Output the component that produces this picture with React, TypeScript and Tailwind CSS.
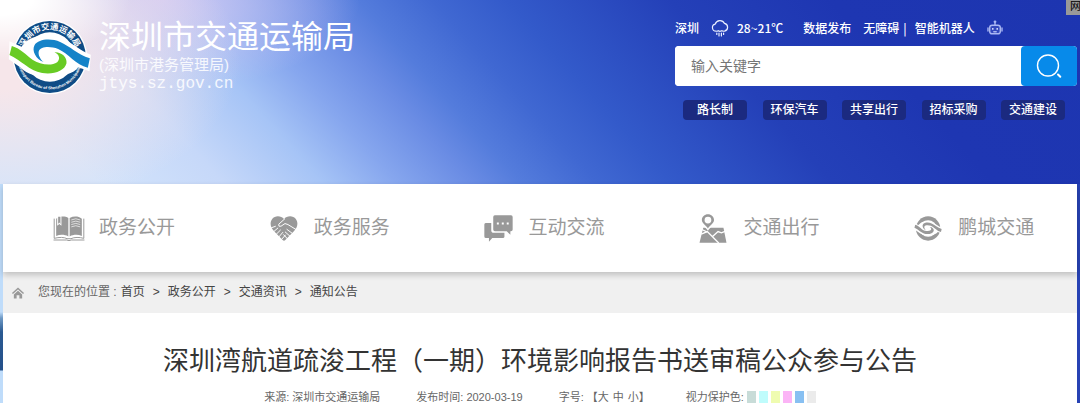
import type { ReactNode } from "react";

const quickLinks = ["路长制", "环保汽车", "共享出行", "招标采购", "交通建设"];

const crumbs = ["首页", "政务公开", "交通资讯", "通知公告"];

const eyeColors = [
  { name: "灰绿", className: "bg-[#c8dcd8]" },
  { name: "浅青", className: "bg-[#bffcfc]" },
  { name: "浅黄", className: "bg-[#effcb0]" },
  { name: "浅粉", className: "bg-[#fbb4f6]" },
  { name: "浅蓝", className: "bg-[#88c0f2]" },
  { name: "浅灰", className: "bg-[#ebebeb]" },
];

// Ring with the two interlocking roads, shared by the logo and the nav icon
function Emblem({ ring, upper, lower }: { ring: string; upper: string; lower: string }) {
  return (
    <>
      <circle cx="147" cy="171" r="112" fill="#fff" />
      <circle cx="147" cy="171" r="108" fill={ring} />
      <circle cx="147" cy="171" r="74" fill="#fff" />
      <path
        d="M26 124L62 140C84 112 110 104 150 106C200 110 225 148 270 164L266 214L232 202C210 236 100 246 62 205L24 178Z"
        fill="#fff"
      />
      <path
        d="M128 186C105 178 92 152 101 136C112 117 150 114 178 126C206 138 230 163 267 175L261 203C225 195 202 160 172 147C148 138 120 139 114 153C111 164 118 178 128 186Z"
        fill={upper}
      />
      <path
        d="M33 138L26 165C62 181 84 212 124 219C158 224 191 214 197 190C199 172 183 156 161 157C176 164 179 177 169 187C150 200 116 193 95 179C74 164 60 146 33 138Z"
        fill={lower}
      />
    </>
  );
}

function BureauLogo() {
  return (
    <svg viewBox="22 54 248 234" className="h-[78px] w-[83px] shrink-0" aria-hidden="true">
      <defs>
        <path id="arc-top" d="M65 171a82 82 0 0 1 164 0" />
        <path id="arc-bottom" d="M50 171a97 97 0 0 0 194 0" />
      </defs>
      <Emblem ring="#0f4c86" upper="#1583c8" lower="#68cb24" />
      <text fill="#fff" fontSize="25" fontWeight="700">
        <textPath href="#arc-top" startOffset="50%" textAnchor="middle">深圳市交通运输局</textPath>
      </text>
      <text fill="#fff" fontSize="12" fontWeight="700">
        <textPath href="#arc-bottom" startOffset="50%" textAnchor="middle">
          Transport Bureau of Shenzhen Municipality
        </textPath>
      </text>
    </svg>
  );
}

function RainIcon() {
  return (
    <svg viewBox="0 0 18 18" className="h-[18px] w-[18px]" fill="none" stroke="#e8edff" strokeWidth="1.2" strokeLinecap="round" aria-hidden="true">
      <path d="M5 12.2a3.6 3.6 0 0 1-.8-7.1A5 5 0 0 1 13.5 4.4 4 4 0 0 1 13.5 12.2c-1.3 .2-2-.2-2.8-.5-1 .6-2.600 .6-3.4 0-.8 .5-1.5 .6-2.3 .5z" />
      <path d="M5.8 14v1.500M8 14v3M10.4 14v3M12.6 14v1.500" />
    </svg>
  );
}

function RobotIcon() {
  return (
    <svg viewBox="0 0 16 16" className="h-4 w-4" fill="none" stroke="#a9b6f2" strokeWidth="1.4" aria-hidden="true">
      <path d="M8 5V3" />
      <circle cx="8" cy="1.8" r="1.4" fill="#a9b6f2" stroke="none" />
      <rect x="2.7" y="5.2" width="10.6" height="8.6" rx="2.4" fill="#3348bd" />
      <path d="M1 8v3M15 8v3M6.800 11.800h2.400" strokeLinecap="round" />
      <path d="M5.8 8v1.800M10.2 8v1.800" stroke="#dfe4ff" />
    </svg>
  );
}

function SearchIcon() {
  return (
    <svg viewBox="0 0 26 26" className="h-[26px] w-[26px]" fill="none" stroke="#fff" strokeWidth="1.4" strokeLinecap="round" aria-hidden="true">
      <circle cx="12" cy="12.5" r="10.5" />
      <path d="M22 21.500l2.300 2.300" strokeWidth="2" />
    </svg>
  );
}

function BookIcon() {
  return (
    <svg viewBox="0 0 96 76" className="h-[25px] w-8" aria-hidden="true">
      <path d="M9 8C20 0 36 0 46 6V62C34 56 20 56 9 61Z" fill="#999" />
      <path d="M50 6C62 0 76 0 87 8V61C76 56 62 56 50 62Z" fill="#999" />
      <path d="M12 0h13v30l-6.500-6-6.500 6z" fill="#fff" />
      <path d="M15 2h7v22l-3.500-4-3.500 4z" fill="#999" />
      <path d="M55 12q14-7 27 0M55 19q14-7 27 0M55 26q14-7 27 0M55 33q14-7 27 0" fill="none" stroke="#fff" strokeWidth="2" />
      <path d="M3 8V68C18 64 34 64 42 69H54C64 64 80 64 93 68V8" fill="none" stroke="#999" strokeWidth="3" />
      <path d="M1 73h40l7 2 7-2h40" fill="none" stroke="#999" strokeWidth="3" />
    </svg>
  );
}

function HandshakeIcon() {
  return (
    <svg viewBox="0 0 84 76" className="h-[25px] w-7" aria-hidden="true">
      <path d="M42 9C33-2 14-2 6 9C-3 22 2 36 12 46L38 73Q42 77 46 73L72 46C82 36 87 22 78 9C70-2 51-2 42 9Z" fill="#999" />
      <path
        d="M3 36L17 31M45 8L26 25Q24 34 33 31L45 23L54 26L80 42"
        fill="none"
        stroke="#fff"
        strokeWidth="3"
      />
      <path
        d="M8 50L24 36M18 56L32 42M26 64L39 49M34 72L47 57M50 40L70 55M45 48L62 63M40 56L54 71"
        fill="none"
        stroke="#fff"
        strokeWidth="3"
      />
    </svg>
  );
}

function ChatIcon() {
  return (
    <svg viewBox="0 0 88 82" className="h-[27px] w-[29px]" aria-hidden="true">
      <path d="M5 24H22V46Q22 54 30 54H62V66Q62 70 57 70H25L15 81V70H6Q1 70 1 65V29Q1 24 5 24Z" fill="#999" />
      <path d="M33 1H82Q87 1 87 6V44Q87 49 82 49H80V60L69 49H33Q28 49 28 44V6Q28 1 33 1Z" fill="#999" />
      <path d="M39 23h6v6h-6zM54 23h6v6h-6zM69 23h6v6h-6z" fill="#fff" />
    </svg>
  );
}

function MapIcon() {
  return (
    <svg viewBox="0 0 82 86" className="h-[29px] w-7" aria-hidden="true">
      <path d="M12 41H72L81 85H1Z" fill="#999" />
      <path d="M6 60L24 52L58 86M38 68L56 52L66 56L80 50M8 46L24 54" fill="none" stroke="#fff" strokeWidth="4" />
      <path d="M26-3C13-3 4 7 4 18C4 30 18 38 26 50C34 38 48 30 48 18C48 7 39-3 26-3Z" fill="#fff" />
      <path d="M26 1C16 1 8 9 8 18C8 28 20 34 26 43C32 34 44 28 44 18C44 9 36 1 26 1Z" fill="#999" />
      <circle cx="26" cy="18" r="10" fill="#fff" />
    </svg>
  );
}

function TransitIcon() {
  return (
    <svg viewBox="22 54 248 234" className="h-[27px] w-7" aria-hidden="true">
      <Emblem ring="#999" upper="#999" lower="#999" />
    </svg>
  );
}

const navItems: { label: string; icon: ReactNode }[] = [
  { label: "政务公开", icon: <BookIcon /> },
  { label: "政务服务", icon: <HandshakeIcon /> },
  { label: "互动交流", icon: <ChatIcon /> },
  { label: "交通出行", icon: <MapIcon /> },
  { label: "鹏城交通", icon: <TransitIcon /> },
];

function SiteHeader() {
  return (
    <header className="relative flex justify-between bg-[radial-gradient(ellipse_130px_60px_at_0px_0px,#ffffff_25%,#ffffff00_100%),radial-gradient(ellipse_240px_150px_at_0px_60px,#f6e6ea_20%,#f6e6ea00_100%),radial-gradient(ellipse_200px_90px_at_160px_0px,#cfc8f2_0%,#cfc8f200_100%),linear-gradient(48deg,#d3e4fb_8%,#c6d8f9_18%,#a6c4f6_26%,#86a6ee_32%,#6a8ce4_38%,#547cdc_42%,#4068d2_48%,#335aca_54%,#2440b8_67%,#1e36b2_80%,#1d35b0_100%)] pb-16 pl-2 pr-[3px] pt-[18px]">
      <a href="#" className="flex items-start gap-2 text-white">
        <BureauLogo />
        <div>
          <h1 className="text-[32px] leading-[38px]">深圳市交通运输局</h1>
          <p className="text-[15px] leading-[18px] text-white/85">(深圳市港务管理局)</p>
          <p className="font-['Liberation_Mono',monospace] text-base leading-5 text-white/85">jtys.sz.gov.cn</p>
        </div>
      </a>

      <div className="w-[402px]">
        <div className="flex h-5 items-center font-['Noto_Sans_CJK_SC',sans-serif] text-xs font-medium text-white">
          <span>深圳</span>
          <span className="ml-3 mr-2">
            <RainIcon />
          </span>
          <span>28~21℃</span>
          <a href="#" className="ml-5">数据发布</a>
          <a href="#" className="ml-3">无障碍</a>
          <span className="mx-1">|</span>
          <a href="#" className="ml-1 flex gap-3">
            智能机器人
            <RobotIcon />
          </a>
        </div>

        <form className="mt-2 flex h-10 rounded bg-white" onSubmit={(e) => e.preventDefault()}>
          <input
            type="text"
            aria-label="输入关键字"
            placeholder="输入关键字"
            className="min-w-0 flex-1 rounded bg-white px-4 text-sm text-gray-700 outline-none placeholder:text-[#757575]"
          />
          <button type="submit" aria-label="搜索" className="flex w-14 items-center justify-center rounded bg-[#078aea]">
            <SearchIcon />
          </button>
        </form>

        <nav className="mt-[14px] flex justify-between pl-2 pr-3">
          {quickLinks.map((label) => (
            <a key={label} href="#" className="w-16 rounded bg-[#1b2a80] text-center text-xs font-medium leading-5 text-white">
              {label}
            </a>
          ))}
        </nav>
      </div>

      <span className="absolute right-0 top-0 h-[15px] w-[14px] overflow-hidden bg-[#999] pl-1 text-[11px] leading-3 text-black">
        网
      </span>
    </header>
  );
}

function MainNav() {
  return (
    <nav className="relative grid grid-cols-5 bg-white shadow-[0_3px_6px_rgba(0,0,0,0.2)]">
      {navItems.map(({ label, icon }) => (
        <a key={label} href="#" className="flex h-[88px] items-center gap-3 pl-12 text-[19px] text-[#999]">
          <span className="flex w-9 justify-center">{icon}</span>
          {label}
        </a>
      ))}
    </nav>
  );
}

function Breadcrumb() {
  return (
    <nav className="flex items-center bg-[#f0f0f0] pl-2 text-xs leading-[41px] text-[#444]">
      <svg viewBox="0 0 14 13" className="mr-[13px] h-3 w-[14px]" aria-hidden="true">
        <path d="M1 7L7 1.500L13 7" fill="none" stroke="#999" strokeWidth="1.6" />
        <path d="M7 4L11.500 8V12.500H8.500V9H5.500V12.500H2.500V8Z" fill="#999" />
      </svg>
      <span className="mr-1 text-[#666]">您现在的位置 :</span>
      {crumbs.map((crumb, i) => (
        <span key={crumb}>
          {i > 0 && <span className="mx-2">&gt;</span>}
          <a href="#">{crumb}</a>
        </span>
      ))}
    </nav>
  );
}

function Article() {
  return (
    <article className="bg-white pb-2 pt-7 text-center">
      <h2 className="text-[26px] leading-10 text-[#333]">
        深圳湾航道疏浚工程（一期）环境影响报告书送审稿公众参与公告
      </h2>
      <div className="mt-2 flex justify-center gap-9 text-[11px] leading-4 text-[#666]">
        <span>来源: 深圳市交通运输局</span>
        <span>发布时间: 2020-03-19</span>
        <span className="flex">
          字号: 【
          <button type="button">大</button>
          <button type="button" className="mx-1">中</button>
          <button type="button">小</button>】
        </span>
        <span className="flex items-center gap-[3px]">
          视力保护色:
          {eyeColors.map(({ name, className }) => (
            <button key={name} type="button" aria-label={name} className={`h-3 w-[9px] ${className}`} />
          ))}
        </span>
      </div>
    </article>
  );
}

export default function App() {
  return (
    <div
      lang="zh-CN"
      className="min-h-screen bg-[#2742b4] bg-[linear-gradient(180deg,#bfdcfa_312px,#6f9ac6_318px,#2b5a92_332px,#24508a_370px,#bfdcfa_371px)] bg-[length:50%_100%] bg-no-repeat font-['Liberation_Sans','Noto_Sans_CJK_SC',sans-serif]"
    >
      <SiteHeader />
      <main className="mx-[3px]">
        <MainNav />
        <Breadcrumb />
        <Article />
      </main>
    </div>
  );
}
